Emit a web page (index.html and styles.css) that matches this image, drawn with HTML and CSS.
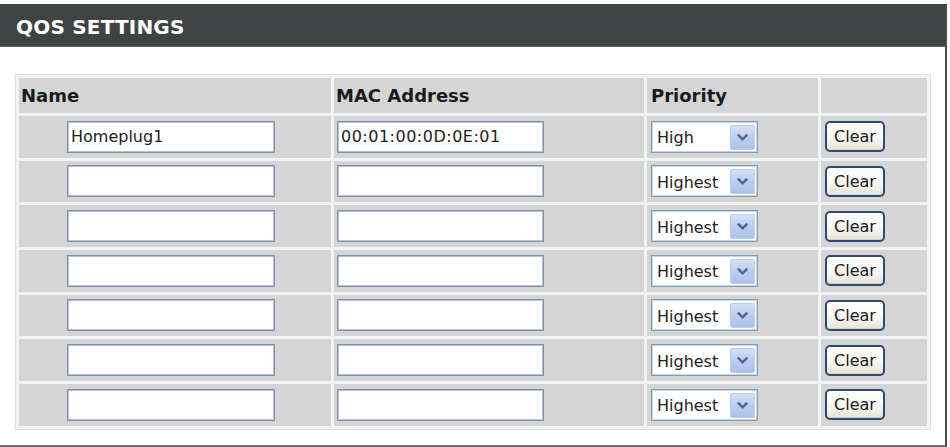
FILE: index.html
```html
<!DOCTYPE html>
<html lang="en">
<head>
<meta charset="utf-8">
<title>QoS Settings</title>
<link rel="stylesheet" href="styles.css">
</head>
<body>
<div class="panel">
  <div class="panel-head"><h2>QOS SETTINGS</h2></div>
  <div class="panel-body">
    <table class="qos">
      <colgroup>
        <col class="col-name"><col class="col-mac"><col class="col-pri"><col class="col-act">
      </colgroup>
      <thead>
        <tr><th>Name</th><th>MAC Address</th><th class="th-pri">Priority</th><th></th></tr>
      </thead>
      <tbody>
        <tr>
          <td class="td-name"><input class="txt" type="text" value="Homeplug1"></td>
          <td class="td-mac"><input class="txt mac" type="text" value="00:01:00:0D:0E:01"></td>
          <td class="td-pri"><span class="sel"><select><option>Highest</option><option selected>High</option><option>Normal</option><option>Low</option></select><span class="arrow"><svg viewBox="0 0 25 25" width="25" height="25"><path d="M8.4 10.2 L12.6 14.4 L16.8 10.2" /></svg></span></span></td>
          <td class="td-act"><button class="btn" type="button">Clear</button></td>
        </tr>
        <tr>
          <td class="td-name"><input class="txt" type="text" value=""></td>
          <td class="td-mac"><input class="txt mac" type="text" value=""></td>
          <td class="td-pri"><span class="sel"><select><option selected>Highest</option><option>High</option><option>Normal</option><option>Low</option></select><span class="arrow"><svg viewBox="0 0 25 25" width="25" height="25"><path d="M8.4 10.2 L12.6 14.4 L16.8 10.2" /></svg></span></span></td>
          <td class="td-act"><button class="btn" type="button">Clear</button></td>
        </tr>
        <tr>
          <td class="td-name"><input class="txt" type="text" value=""></td>
          <td class="td-mac"><input class="txt mac" type="text" value=""></td>
          <td class="td-pri"><span class="sel"><select><option selected>Highest</option><option>High</option><option>Normal</option><option>Low</option></select><span class="arrow"><svg viewBox="0 0 25 25" width="25" height="25"><path d="M8.4 10.2 L12.6 14.4 L16.8 10.2" /></svg></span></span></td>
          <td class="td-act"><button class="btn" type="button">Clear</button></td>
        </tr>
        <tr>
          <td class="td-name"><input class="txt" type="text" value=""></td>
          <td class="td-mac"><input class="txt mac" type="text" value=""></td>
          <td class="td-pri"><span class="sel"><select><option selected>Highest</option><option>High</option><option>Normal</option><option>Low</option></select><span class="arrow"><svg viewBox="0 0 25 25" width="25" height="25"><path d="M8.4 10.2 L12.6 14.4 L16.8 10.2" /></svg></span></span></td>
          <td class="td-act"><button class="btn" type="button">Clear</button></td>
        </tr>
        <tr>
          <td class="td-name"><input class="txt" type="text" value=""></td>
          <td class="td-mac"><input class="txt mac" type="text" value=""></td>
          <td class="td-pri"><span class="sel"><select><option selected>Highest</option><option>High</option><option>Normal</option><option>Low</option></select><span class="arrow"><svg viewBox="0 0 25 25" width="25" height="25"><path d="M8.4 10.2 L12.6 14.4 L16.8 10.2" /></svg></span></span></td>
          <td class="td-act"><button class="btn" type="button">Clear</button></td>
        </tr>
        <tr>
          <td class="td-name"><input class="txt" type="text" value=""></td>
          <td class="td-mac"><input class="txt mac" type="text" value=""></td>
          <td class="td-pri"><span class="sel"><select><option selected>Highest</option><option>High</option><option>Normal</option><option>Low</option></select><span class="arrow"><svg viewBox="0 0 25 25" width="25" height="25"><path d="M8.4 10.2 L12.6 14.4 L16.8 10.2" /></svg></span></span></td>
          <td class="td-act"><button class="btn" type="button">Clear</button></td>
        </tr>
        <tr>
          <td class="td-name"><input class="txt" type="text" value=""></td>
          <td class="td-mac"><input class="txt mac" type="text" value=""></td>
          <td class="td-pri"><span class="sel"><select><option selected>Highest</option><option>High</option><option>Normal</option><option>Low</option></select><span class="arrow"><svg viewBox="0 0 25 25" width="25" height="25"><path d="M8.4 10.2 L12.6 14.4 L16.8 10.2" /></svg></span></span></td>
          <td class="td-act"><button class="btn" type="button">Clear</button></td>
        </tr>
      </tbody>
    </table>
  </div>
</div>
</body>
</html>
```

FILE: styles.css
```css
html, body {
  margin: 0;
  padding: 0;
  background: #ffffff;
}

body {
  font-family: "DejaVu Sans", Verdana, sans-serif;
  color: #1e1e1e;
}

.panel {
  width: 945px;
  height: 441px;
  margin-top: 4px;
  border-right: 2px solid #4a4c4c;
  border-bottom: 2px solid #6a6a6a;
  background: #ffffff;
}

.panel-head {
  height: 43px;
  box-sizing: border-box;
  padding: 5px 0 0 16px;
  background: #404343;
  border-bottom: 1px solid #5a5d5d;
}

.panel-head h2 {
  margin: 0;
  font-size: 20px;
  line-height: 37px;
  font-weight: bold;
  color: #ffffff;
  letter-spacing: 0.2px;
}

.panel-body {
  height: 398px;
  box-sizing: border-box;
  padding: 27px 0 0 15px;
}

.qos {
  width: 916px;
  table-layout: fixed;
  border-collapse: separate;
  border-spacing: 3px;
  border: 1px solid #dddddd;
  background: #f3f3f3;
}

.col-name { width: 312px; }
.col-mac { width: 310px; }
.col-pri { width: 171px; }
.col-act { width: 106px; }

.qos th,
.qos td {
  background: #d5d5d5;
  padding: 0;
  vertical-align: middle;
  text-align: left;
}

.qos th {
  height: 35px;
  padding-left: 2px;
  font-size: 18px;
  font-weight: bold;
  color: #1b1b1b;
}

.qos th.th-pri {
  padding-left: 4px;
}

.qos td {
  height: 41.67px;
}

.td-name { padding-left: 48px !important; }
.td-mac { padding-left: 3px !important; }
.td-pri { padding-left: 4px !important; }
.td-act { padding-left: 4px !important; }

.txt {
  display: block;
  width: 208px;
  height: 32px;
  box-sizing: border-box;
  margin: 0;
  padding: 0 3px;
  border: 1px solid #7f92a8;
  box-shadow: inset 0 0 0 1px #b4c1d0;
  background: #ffffff;
  font-family: "DejaVu Sans", Verdana, sans-serif;
  font-size: 16px;
  color: #222222;
  outline: none;
}

.txt.mac {
  width: 207px;
  letter-spacing: 0.5px;
}

.sel {
  position: relative;
  display: block;
  width: 107px;
  height: 32px;
}

.sel select {
  -webkit-appearance: none;
  appearance: none;
  width: 100%;
  height: 100%;
  box-sizing: border-box;
  margin: 0;
  padding: 2px 0 0 5px;
  border: 1px solid #7f9db9;
  box-shadow: inset 0 0 0 1px #c9d4e0;
  border-radius: 0;
  background: #ffffff;
  font-family: "DejaVu Sans", Verdana, sans-serif;
  font-size: 16px;
  color: #222222;
  outline: none;
}

.sel .arrow {
  position: absolute;
  top: 4px;
  right: 3px;
  width: 25px;
  height: 25px;
  box-sizing: border-box;
  border: 1px solid #bccbe6;
  border-radius: 2px;
  background: linear-gradient(180deg, #d3e0f6 0%, #bccdee 50%, #aec2e9 100%);
  pointer-events: none;
}

.sel .arrow svg {
  display: block;
  width: 23px;
  height: 23px;
}

.sel .arrow path {
  fill: none;
  stroke: #4d6593;
  stroke-width: 2.6;
  stroke-linecap: square;
  stroke-linejoin: miter;
}

.btn {
  display: block;
  width: 60px;
  height: 31px;
  box-sizing: border-box;
  margin: 0;
  padding: 0;
  border: 2px solid #2f4a73;
  border-radius: 5px;
  background: linear-gradient(180deg, #ffffff 0%, #f7f6f1 55%, #e6e3d7 100%);
  box-shadow: inset 0 -1px 0 #d8d4c4;
  font-family: "DejaVu Sans", Verdana, sans-serif;
  font-size: 16px;
  color: #1a1a1a;
  cursor: pointer;
}
```
